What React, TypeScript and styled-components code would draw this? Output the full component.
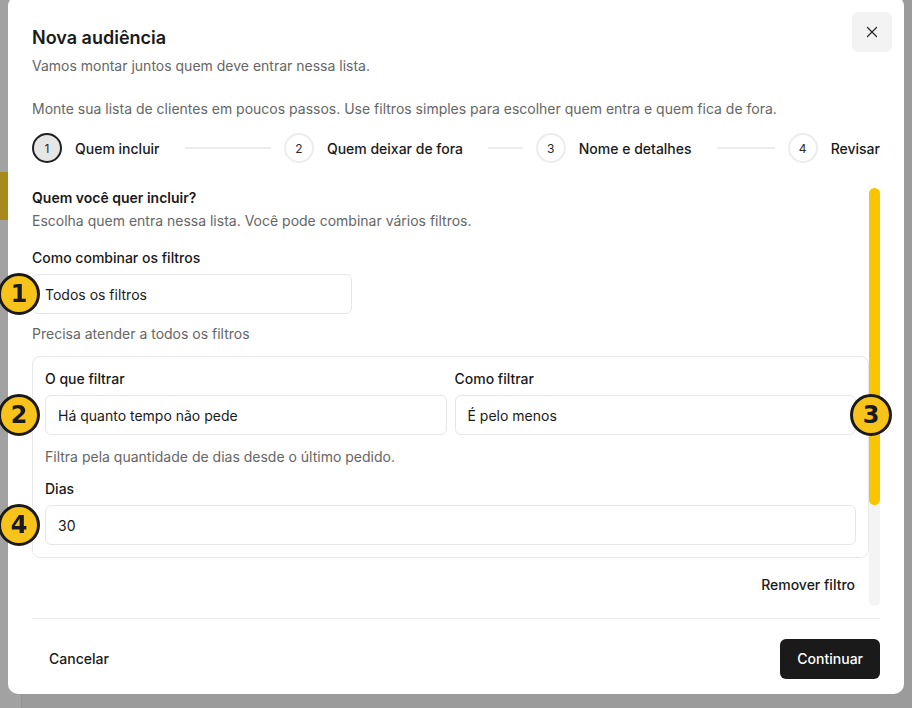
import React from "react";
import styled, { createGlobalStyle } from "styled-components";
import { X } from "lucide-react";

const Global = createGlobalStyle`
  html, body { margin: 0; padding: 0; height: 100%; }
  body {
    font-family: Inter, "Noto Sans", "Liberation Sans", sans-serif;
    background: #9b9b9b;
    overflow: hidden;
    color: #1a1a1a;
  }
  * { box-sizing: border-box; }
`;

const Page = styled.div`
  width: 912px;
  height: 708px;
  display: flex;
  background: #9b9b9b;
`;

const Sidebar = styled.aside`
  width: 22px;
  height: 100%;
  background: #a2a2a2;
  border-right: 1px solid #939393;
  padding-top: 172px;
`;

const SideActive = styled.div`
  width: 8px;
  height: 48px;
  background: #a88a1c;
`;

const Overlay = styled.div`
  position: fixed;
  inset: 0;
  display: flex;
  justify-content: center;
  align-items: flex-start;
`;

const Modal = styled.div`
  position: relative;
  margin-top: -4px;
  width: 896px;
  height: 698px;
  background: #fff;
  border-radius: 10px;
  display: flex;
  flex-direction: column;
  padding: 30px 24px 15px 24px;
`;

const CloseButton = styled.button`
  position: absolute;
  top: 16px;
  right: 12px;
  width: 40px;
  height: 40px;
  border: none;
  border-radius: 6px;
  background: #f3f3f3;
  display: flex;
  align-items: center;
  justify-content: center;
  color: #2a2a2a;
  padding: 0;
`;

const Title = styled.h2`
  margin: 0;
  font-size: 18px;
  line-height: 24px;
  font-weight: 600;
  color: #1a1a1a;
`;

const Muted = styled.p<{ $mt?: number }>`
  margin: ${(p) => p.$mt ?? 0}px 0 0;
  font-size: 14px;
  line-height: 20px;
  color: #666;
`;

const Stepper = styled.div`
  display: flex;
  align-items: center;
  gap: 13px;
  margin-top: 14px;
  width: 848px;
`;

const Step = styled.div<{ $last?: boolean }>`
  display: flex;
  align-items: center;
  gap: 13px;
  flex: ${(p) => (p.$last ? "0 0 auto" : "1 1 0")};
  min-width: 0;
`;

const StepCircle = styled.div<{ $active?: boolean }>`
  width: 30px;
  height: 30px;
  flex: 0 0 30px;
  border-radius: 50%;
  border: 2px solid ${(p) => (p.$active ? "#1f1f1f" : "#ececec")};
  background: ${(p) => (p.$active ? "#e6e6e6" : "#fff")};
  display: flex;
  align-items: center;
  justify-content: center;
  font-size: 12px;
  color: #2a2a2a;
`;

const StepLabel = styled.span`
  font-size: 14px;
  font-weight: 500;
  white-space: nowrap;
  color: #1a1a1a;
`;

const StepLine = styled.div`
  flex: 1;
  height: 2px;
  background: #ececec;
  margin-left: 12px;
`;

const ScrollArea = styled.div`
  margin-top: 25px;
  height: 418px;
  width: 848px;
  display: flex;
`;

const ScrollContent = styled.div`
  flex: 1;
  min-width: 0;
  overflow: hidden;
`;

const ScrollTrack = styled.div`
  width: 11px;
  flex: 0 0 11px;
  height: 100%;
  background: #f4f4f4;
  border-radius: 6px;
`;

const ScrollThumb = styled.div`
  width: 100%;
  border-radius: 6px;
  background: #f7c600;
`;

const SectionTitle = styled.h3`
  margin: 0;
  font-size: 14px;
  line-height: 20px;
  font-weight: 600;
`;

const Label = styled.div<{ $mt?: number }>`
  margin-top: ${(p) => p.$mt ?? 0}px;
  font-size: 14px;
  line-height: 20px;
  font-weight: 500;
  color: #1a1a1a;
`;

const SelectBox = styled.div<{ $width?: string }>`
  margin-top: 6px;
  width: ${(p) => p.$width ?? "100%"};
  height: 40px;
  border: 1px solid #e6e6e6;
  border-radius: 6px;
  display: flex;
  align-items: center;
  padding: 0 12px;
  font-size: 14px;
  color: #1a1a1a;
  background: #fff;
`;

const FilterCard = styled.div`
  margin-top: 12px;
  border: 1px solid #e8e8e8;
  border-radius: 8px;
  padding: 12px;
`;

const Row = styled.div`
  display: grid;
  grid-template-columns: 1fr 1fr;
  gap: 8px;
`;

const Field = styled.div`
  display: flex;
  flex-direction: column;
`;

const Actions = styled.div`
  display: flex;
  justify-content: flex-end;
  margin-top: 9px;
`;

const GhostButton = styled.button`
  height: 36px;
  line-height: 20px;
  padding: 0 14px;
  border: none;
  background: transparent;
  font-family: inherit;
  font-size: 14px;
  font-weight: 500;
  color: #1a1a1a;
  border-radius: 6px;
`;

const Footer = styled.div`
  margin-top: 12px;
  width: 848px;
  border-top: 1px solid #ebebeb;
  padding-top: 20px;
  display: flex;
  justify-content: space-between;
  align-items: center;
`;

const CancelButton = styled(GhostButton)`
  height: 40px;
  padding: 0 17px;
`;

const PrimaryButton = styled.button`
  height: 40px;
  line-height: 20px;
  padding: 0 17px;
  border: none;
  border-radius: 6px;
  background: #1a1a1a;
  color: #fff;
  font-family: inherit;
  font-size: 14px;
  font-weight: 500;
`;

const Badge = styled.div<{ $x: number; $y: number }>`
  position: fixed;
  left: ${(p) => p.$x - 21}px;
  top: ${(p) => p.$y - 21}px;
  width: 42px;
  height: 42px;
  border-radius: 50%;
  background: #f7c21a;
  border: 3px solid #1a1a1a;
  display: flex;
  align-items: center;
  justify-content: center;
  font-family: "DejaVu Sans", "Liberation Sans", sans-serif;
  font-weight: 700;
  font-size: 24px;
  color: #1a1a1a;
  z-index: 10;
`;

const steps = ["Quem incluir", "Quem deixar de fora", "Nome e detalhes", "Revisar"];

export default function App() {
  const thumbHeight = 317;
  return (
    <>
      <Global />
      <Page>
        <Sidebar>
          <SideActive />
        </Sidebar>
      </Page>
      <Overlay>
        <Modal>
          <CloseButton aria-label="Fechar">
            <X size={18} strokeWidth={1.75} />
          </CloseButton>
          <Title>Nova audiência</Title>
          <Muted $mt={6}>Vamos montar juntos quem deve entrar nessa lista.</Muted>
          <Muted $mt={23}>
            Monte sua lista de clientes em poucos passos. Use filtros simples para escolher quem entra e quem fica de fora.
          </Muted>
          <Stepper>
            {steps.map((s, i) => (
              <Step key={s} $last={i === steps.length - 1}>
                <StepCircle $active={i === 0}>{i + 1}</StepCircle>
                <StepLabel>{s}</StepLabel>
                {i < steps.length - 1 && <StepLine />}
              </Step>
            ))}
          </Stepper>
          <ScrollArea>
            <ScrollContent>
              <SectionTitle>Quem você quer incluir?</SectionTitle>
              <Muted $mt={3}>Escolha quem entra nessa lista. Você pode combinar vários filtros.</Muted>
              <Label $mt={17}>Como combinar os filtros</Label>
              <SelectBox $width="320px">Todos os filtros</SelectBox>
              <Muted $mt={10}>Precisa atender a todos os filtros</Muted>
              <FilterCard>
                <Row>
                  <Field>
                    <Label>O que filtrar</Label>
                    <SelectBox>Há quanto tempo não pede</SelectBox>
                  </Field>
                  <Field>
                    <Label>Como filtrar</Label>
                    <SelectBox>É pelo menos</SelectBox>
                  </Field>
                </Row>
                <Muted $mt={12}>Filtra pela quantidade de dias desde o último pedido.</Muted>
                <Label $mt={12}>Dias</Label>
                <SelectBox>30</SelectBox>
              </FilterCard>
              <Actions>
                <GhostButton>Remover filtro</GhostButton>
              </Actions>
            </ScrollContent>
            <ScrollTrack>
              <ScrollThumb style={{ height: thumbHeight }} />
            </ScrollTrack>
          </ScrollArea>
          <Footer>
            <CancelButton>Cancelar</CancelButton>
            <PrimaryButton>Continuar</PrimaryButton>
          </Footer>
        </Modal>
      </Overlay>
      <Badge $x={19} $y={294}>1</Badge>
      <Badge $x={19} $y={415}>2</Badge>
      <Badge $x={871} $y={415}>3</Badge>
      <Badge $x={19} $y={525}>4</Badge>
    </>
  );
}
